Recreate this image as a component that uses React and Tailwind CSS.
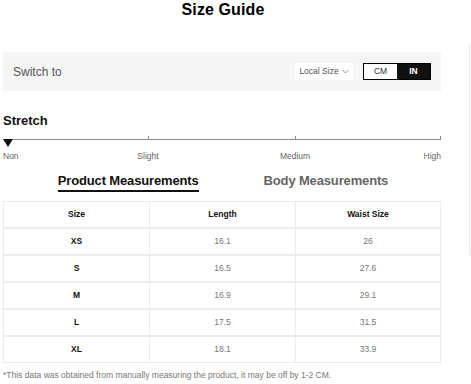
import React, { useState } from "react";

const ROWS = [
  ["XS", "16.1", "26"],
  ["S", "16.5", "27.6"],
  ["M", "16.9", "29.1"],
  ["L", "17.5", "31.5"],
  ["XL", "18.1", "33.9"],
];

function StretchScale() {
  return (
    <div className="mt-[7px]">
      <div className="relative h-[12px]">
        <div className="absolute left-0 right-0 top-[5px] h-px bg-[#8a8a8a]" />
        <div className="absolute left-[145px] top-[2px] w-px h-[4px] bg-[#8a8a8a]" />
        <div className="absolute left-[292px] top-[2px] w-px h-[4px] bg-[#8a8a8a]" />
        <div className="absolute right-0 top-[2px] w-px h-[4px] bg-[#8a8a8a]" />
        <svg className="absolute left-0 top-[5px]" width="10" height="8" viewBox="0 0 10 8">
          <path d="M0 0 L10 0 L5 8 Z" fill="#111" />
        </svg>
      </div>
      <div className="relative h-[9px] text-[8.5px] text-[#666] mt-[6px] leading-none">
        <span className="absolute left-0">Non</span>
        <span className="absolute left-[145px] -translate-x-1/2">Slight</span>
        <span className="absolute left-[292px] -translate-x-1/2">Medium</span>
        <span className="absolute right-0">High</span>
      </div>
    </div>
  );
}

export default function App() {
  const [unit, setUnit] = useState("IN");
  const [tab, setTab] = useState("product");

  return (
    <div className="relative w-[471px] h-[384px] bg-white overflow-hidden font-['Liberation_Sans',Arial,sans-serif]">
      <div className="absolute right-[1px] top-[45px] w-px h-[210px] bg-[#ececec]" />
      <div className="w-[438px] ml-[3px]">
        <h1 className="text-center text-[16px] font-extrabold text-black leading-none pt-[2px] pl-[2px] tracking-[0.1px]">
          Size Guide
        </h1>

        <div className="mt-[34px] h-[39px] bg-[#f5f5f5] flex items-center pl-[10px] pr-[10px]">
          <span className="text-[12px] text-[#555]">Switch to</span>
          <div className="ml-auto flex items-center">
            <div className="h-[17px] w-[58px] bg-white flex items-center justify-center text-[8.5px] text-[#555] gap-[3px]">
              Local Size
              <svg width="7" height="5" viewBox="0 0 7 5">
                <path d="M0.5 1 L3.5 4 L6.5 1" fill="none" stroke="#777" strokeWidth="0.8" />
              </svg>
            </div>
            <div className="ml-[10px] flex border border-black h-[17px]">
              <button
                onClick={() => setUnit("CM")}
                className={`w-[33px] text-[8.5px] ${unit === "CM" ? "bg-[#111] text-white font-bold" : "bg-white text-[#333]"}`}
              >
                CM
              </button>
              <button
                onClick={() => setUnit("IN")}
                className={`w-[33px] text-[8.5px] ${unit === "IN" ? "bg-[#111] text-white font-bold" : "bg-white text-[#333]"}`}
              >
                IN
              </button>
            </div>
          </div>
        </div>

        <div className="mt-[23px] text-[13px] font-bold text-[#111] leading-none">Stretch</div>
        <StretchScale />

        <div className="mt-[13px] flex justify-center gap-[65px] text-[13px] font-bold leading-none pl-[2px]">
          <button
            onClick={() => setTab("product")}
            className={`pb-[3px] border-b-2 tracking-[-0.15px] ${tab === "product" ? "text-[#111] border-[#111]" : "text-[#666] border-transparent"}`}
          >
            Product Measurements
          </button>
          <button
            onClick={() => setTab("body")}
            className={`pb-[3px] border-b-2 tracking-[-0.15px] ${tab === "body" ? "text-[#111] border-[#111]" : "text-[#666] border-transparent"}`}
          >
            Body Measurements
          </button>
        </div>

        <table className="mt-[9px] w-full border border-[#ececec] border-collapse text-[8.5px] table-fixed">
          <thead>
            <tr className="h-[26px] border-b-2 border-[#ececec]">
              <th className="w-[146px] font-bold text-[#111] border-r border-[#ececec]">Size</th>
              <th className="w-[146px] font-bold text-[#111] border-r border-[#ececec]">Length</th>
              <th className="font-bold text-[#111]">Waist Size</th>
            </tr>
          </thead>
          <tbody>
            {ROWS.map((r, i) => (
              <tr key={r[0]} className={`h-[27px] ${i < ROWS.length - 1 ? "border-b-2 border-[#ececec]" : ""}`}>
                <td className="text-center font-bold text-[#111] border-r border-[#ececec]">{r[0]}</td>
                <td className="text-center text-[#777] border-r border-[#ececec]">{r[1]}</td>
                <td className="text-center text-[#777]">{r[2]}</td>
              </tr>
            ))}
          </tbody>
        </table>

        <p className="mt-[8px] text-[8.5px] text-[#777] leading-none">
          *This data was obtained from manually measuring the product, it may be off by 1-2 CM.
        </p>
      </div>
    </div>
  );
}
